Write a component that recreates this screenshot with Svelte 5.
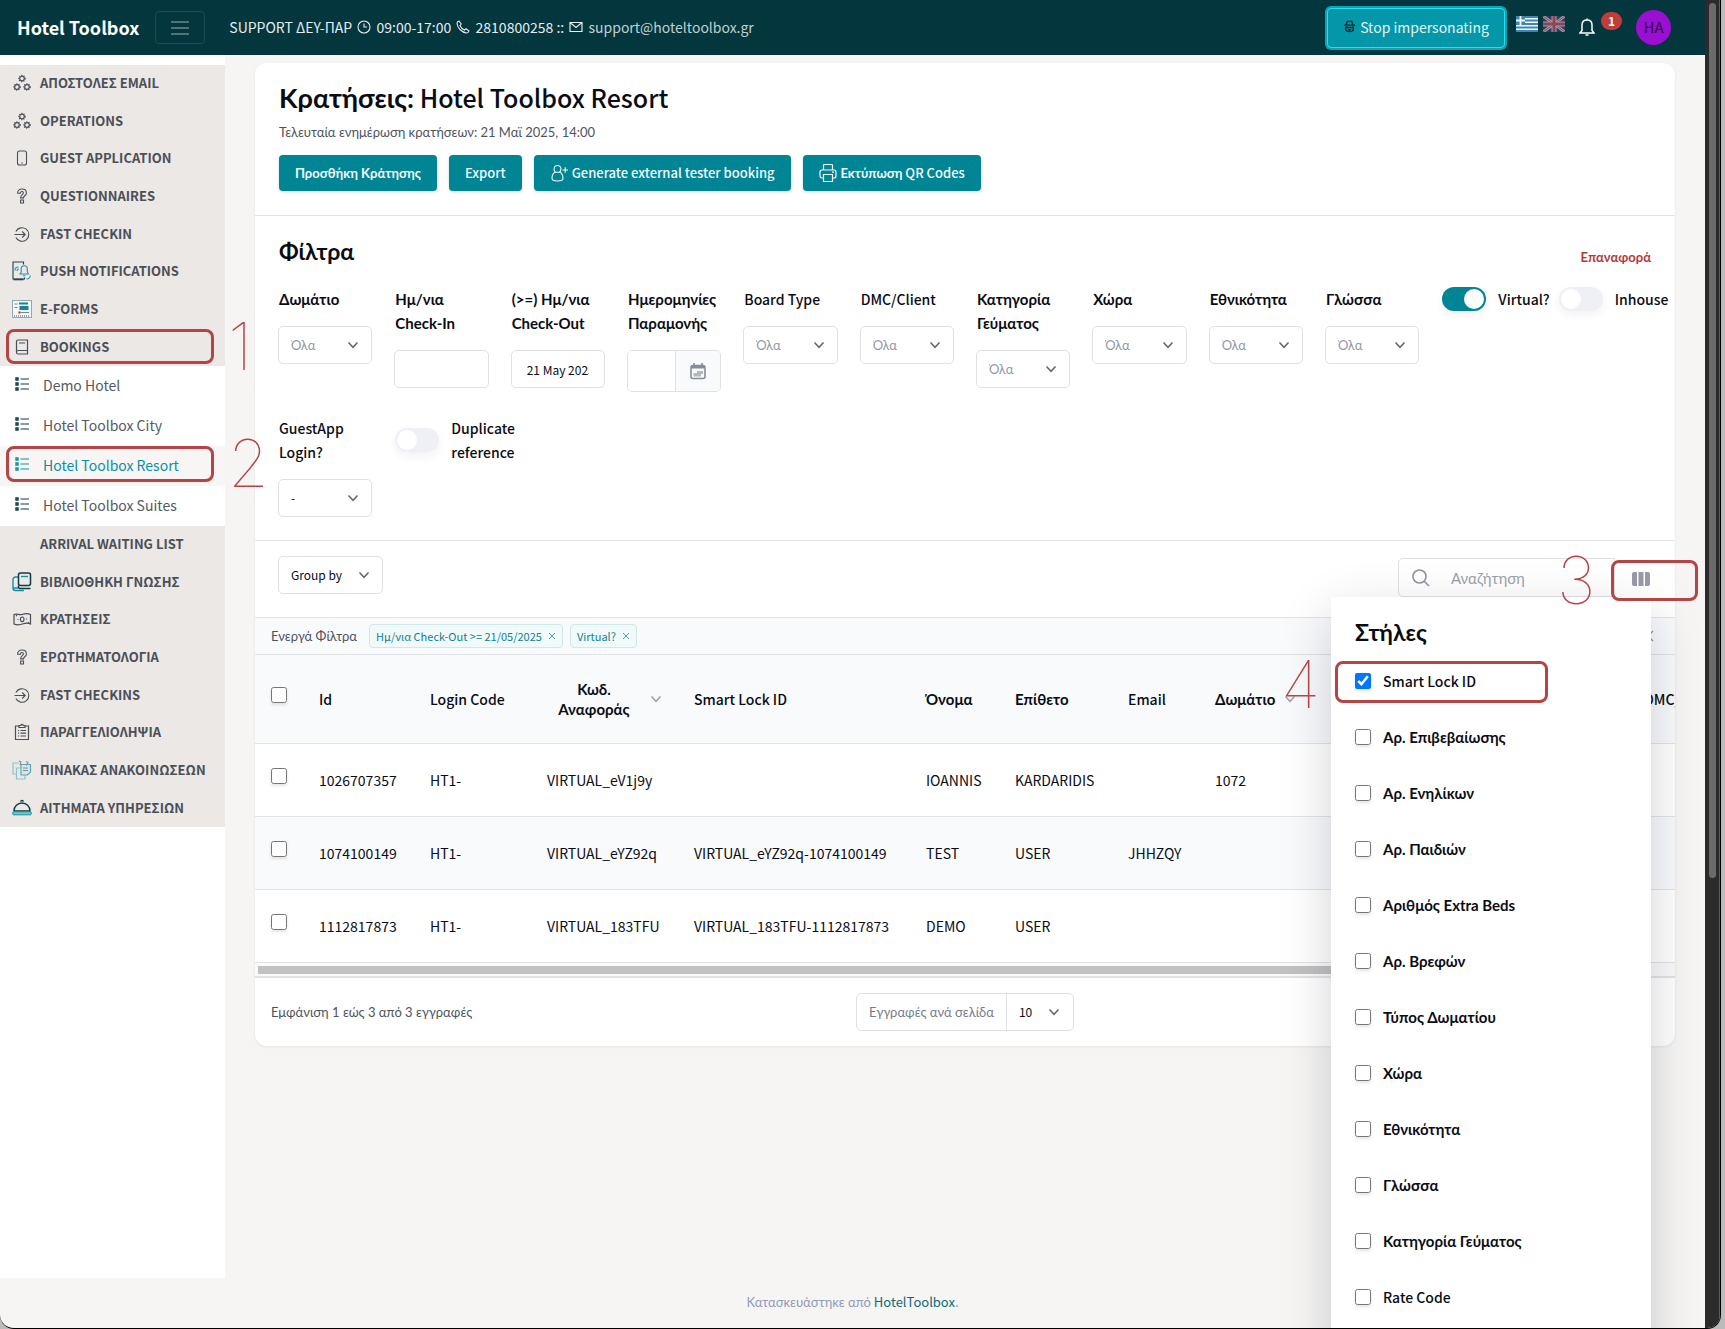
<script lang="ts">
  type MenuItem = { label: string; icon: string };

  const topMenu: MenuItem[] = [
    { label: 'ΑΠΟΣΤΟΛΕΣ EMAIL', icon: 'gears' },
    { label: 'OPERATIONS', icon: 'gears' },
    { label: 'GUEST APPLICATION', icon: 'phone' },
    { label: 'QUESTIONNAIRES', icon: 'question' },
    { label: 'FAST CHECKIN', icon: 'enter' },
    { label: 'PUSH NOTIFICATIONS', icon: 'push' },
    { label: 'E-FORMS', icon: 'form' },
    { label: 'BOOKINGS', icon: 'book' }
  ];

  const hotels = ['Demo Hotel', 'Hotel Toolbox City', 'Hotel Toolbox Resort', 'Hotel Toolbox Suites'];
  let activeHotel = $state('Hotel Toolbox Resort');

  const bottomMenu: MenuItem[] = [
    { label: 'ARRIVAL WAITING LIST', icon: '' },
    { label: 'ΒΙΒΛΙΟΘΗΚΗ ΓΝΩΣΗΣ', icon: 'library' },
    { label: 'ΚΡΑΤΗΣΕΙΣ', icon: 'money' },
    { label: 'ΕΡΩΤΗΜΑΤΟΛΟΓΙΑ', icon: 'question' },
    { label: 'FAST CHECKINS', icon: 'enter' },
    { label: 'ΠΑΡΑΓΓΕΛΙΟΛΗΨΙΑ', icon: 'clipboard' },
    { label: 'ΠΙΝΑΚΑΣ ΑΝΑΚΟΙΝΩΣΕΩΝ', icon: 'board' },
    { label: 'ΑΙΤΗΜΑΤΑ ΥΠΗΡΕΣΙΩΝ', icon: 'bell' }
  ];

  const filters = [
    { id: 'room', label: 'Δωμάτιο', type: 'select' },
    { id: 'checkin', label: 'Ημ/νια Check-In', type: 'text' },
    { id: 'checkout', label: '(>=) Ημ/νια Check-Out', type: 'text', value: '21 May 2025' },
    { id: 'stay', label: 'Ημερομηνίες Παραμονής', type: 'range' },
    { id: 'board', label: 'Board Type', type: 'select' },
    { id: 'dmc', label: 'DMC/Client', type: 'select' },
    { id: 'meal', label: 'Κατηγορία Γεύματος', type: 'select' },
    { id: 'country', label: 'Χώρα', type: 'select' },
    { id: 'nationality', label: 'Εθνικότητα', type: 'select' },
    { id: 'language', label: 'Γλώσσα', type: 'select' },
    { id: 'virtual', label: 'Virtual?', type: 'switch', on: true },
    { id: 'inhouse', label: 'Inhouse', type: 'switch' },
    { id: 'guestapp', label: 'GuestApp Login?', type: 'select', value: '-' },
    { id: 'duplicate', label: 'Duplicate reference', type: 'switch' }
  ];

  const bookings = [
    { id: '1026707357', code: 'HT1-', ref: 'VIRTUAL_eV1j9y', lock: '', name: 'IOANNIS', surname: 'KARDARIDIS', email: '', room: '1072' },
    { id: '1074100149', code: 'HT1-', ref: 'VIRTUAL_eYZ92q', lock: 'VIRTUAL_eYZ92q-1074100149', name: 'TEST', surname: 'USER', email: 'JHHZQY', room: '' },
    { id: '1112817873', code: 'HT1-', ref: 'VIRTUAL_183TFU', lock: 'VIRTUAL_183TFU-1112817873', name: 'DEMO', surname: 'USER', email: '', room: '' }
  ];

  const columns = [
    'Smart Lock ID',
    'Αρ. Επιβεβαίωσης',
    'Αρ. Ενηλίκων',
    'Αρ. Παιδιών',
    'Αριθμός Extra Beds',
    'Αρ. Βρεφών',
    'Τύπος Δωματίου',
    'Χώρα',
    'Εθνικότητα',
    'Γλώσσα',
    'Κατηγορία Γεύματος',
    'Rate Code'
  ];

  const langOf = (text: string) => (/[Ͱ-Ͽ]/.test(text) ? 'el' : 'en');
</script>

{#snippet chevron()}
  <svg class="chevron" viewBox="0 0 12 12" width="12" height="12" aria-hidden="true">
    <path d="M1.5 3.5 6 8.3l4.5-4.8" fill="none" stroke="currentColor" stroke-width="1.5" />
  </svg>
{/snippet}

{#snippet cross()}
  <svg class="x" viewBox="0 0 8 8" width="8" height="8" aria-hidden="true">
    <path d="M1 1l6 6M7 1 1 7" stroke="currentColor" />
  </svg>
{/snippet}

{#snippet menuIcon(name: string)}
  <svg class="menu-icon" viewBox="0 0 20 20" width="20" height="20" aria-hidden="true">
    {#if name === 'gears'}
      <g fill="none" stroke="#4b4f56" stroke-width="1.2">
        <circle cx="10" cy="5.5" r="2.3" /><circle cx="5" cy="14" r="2.3" /><circle cx="15" cy="14" r="2.3" />
        <g stroke-dasharray="1 1.35" stroke-width="1.2">
          <circle cx="10" cy="5.5" r="3.2" /><circle cx="5" cy="14" r="3.2" /><circle cx="15" cy="14" r="3.2" />
        </g>
      </g>
    {:else if name === 'phone'}
      <rect x="5.5" y="3" width="9" height="14" rx="2" fill="none" stroke="#4b4f56" stroke-width="1.1" />
      <path d="M9.2 15h1.6" stroke="#4b4f56" />
    {:else if name === 'question'}
      <path
        d="M5.6 7.2c0-2.6 1.9-4.2 4.4-4.2s4.4 1.6 4.4 3.9c0 2.6-2.9 3-2.9 5H8.6c0-3 2.8-3.2 2.8-5 0-.8-.6-1.4-1.4-1.4s-1.6.6-1.6 1.7zM8.6 14h2.9v3H8.6z"
        fill="none" stroke="#4b4f56" stroke-width="1.1" />
    {:else if name === 'enter'}
      <path d="M3.9 7.5A6.8 6.8 0 1 1 3.9 13.5M2.5 10.5h10.500M10.2 7.5l3 3-3 3" fill="none" stroke="#4b4f56" stroke-width="1.1" />
    {:else if name === 'push'}
      <path d="M3.5 1h8v2.5M3.5 1H1v17h11.500v-1.500" fill="none" stroke="#22444c" stroke-width="1.1" />
      <path d="M1.5 18.5h10" stroke="#22444c" stroke-width="1.6" />
      <path d="M8 13h8.500l-1.200-1.800V8c0-2-1.300-3.200-3-3.200S9.200 6 9.200 8v3.200zM11 14.800h2.500M3 9.500c0-2 1.500-3.500 3.500-3.500M5 10c0-1 .8-2 2-2M14.500 18c2 0 3.800-1.500 3.800-3.500" fill="none" stroke="#2a93a5" stroke-width="1.1" />
    {:else if name === 'form'}
      <rect x=".5" y="1.5" width="19" height="17" fill="#f3f7f7" stroke="#8fa9ad" />
      <path d="M7 4.5h9" stroke="#178395" stroke-width="2" />
      <path d="M7.5 7h9v4h-9z" fill="#178395" />
      <path d="M2.5 5h3M2.5 8.500h3M9 13.500h8" stroke="#6e8a8e" />
      <circle cx="7.5" cy="13.5" r="1.2" fill="#c2413b" />
      <path d="M2 17h16" stroke="#8fa9ad" stroke-width="2" stroke-dasharray="1 1" />
    {:else if name === 'book'}
      <path d="M4.5 4.5c0-1 .6-1.500 1.500-1.500h9.500v14H6c-.9 0-1.500-.5-1.500-1.500zm0 10.500c0-1 .6-1.500 1.500-1.500h9.500M7 6h6" fill="none" stroke="#4b4f56" stroke-width="1.2" />
    {:else if name === 'library'}
      <path d="M6.5 5H3.500C2 5 1 6 1 7.500V16c0 1.500 1 2.500 2.500 2.500H12M1 16h5" fill="none" stroke="#16909f" stroke-width="1.4" />
      <rect x="6.5" y="1" width="12" height="12.5" rx="2" fill="none" stroke="#0d3c46" stroke-width="1.5" />
      <path d="M9 4.5h7" stroke="#16909f" stroke-width="1.4" />
      <path d="M6.5 13.500V15c0 1 .6 1.500 1.500 1.500h10.500" fill="none" stroke="#0d3c46" stroke-width="1.5" />
    {:else if name === 'money'}
      <path d="M2 5.5c3-1.500 5 1 8 0s5-1.500 8.500 0v9.500c-3-1.500-5-1-8 0s-5 1.500-8.500 0z" fill="none" stroke="#4b4f56" stroke-width="1.2" />
      <ellipse cx="10.2" cy="10.3" rx="1.8" ry="2.3" fill="none" stroke="#4b4f56" stroke-width="1.1" />
      <path d="M5.5 10.5h1M14 10h1M4 7l1-.8M16 14l1-.8" stroke="#4b4f56" stroke-width="1.2" />
    {:else if name === 'clipboard'}
      <path d="M7 4H3.500v13.500h13V4H13M7 5.500h6V3.500h-1.800a1.200 1.200 0 0 0-2.400 0H7z" fill="none" stroke="#4b4f56" stroke-width="1.2" />
      <path d="M8.5 8.500h5.500M8.500 11.200h5.500M8.500 14h5.500M6 8.500h1.200M6 11.200h1.200M6 14h1.200" stroke="#4b4f56" stroke-width="1.2" />
    {:else if name === 'board'}
      <path d="M7 3H1v11h3.500M13 14.500V19H4.500V8H8" fill="none" stroke="#8fc3ca" stroke-width="1.2" />
      <path d="M9 4.500h9.500v7.500l-3 3H9z" fill="#d9e6e8" stroke="#57aab5" stroke-width="1.2" />
      <path d="M7 1l2 1-1 3M14 1.500l2 1-1.500 3M11 8h5M11 10.500h5" fill="none" stroke="#7f9095" stroke-width="1.1" />
    {:else if name === 'bell'}
      <path d="M2 13a8 8 0 0 1 16 0zM8.500 3.500a1.600 1.600 0 0 1 3 0" fill="none" stroke="#0d3c46" stroke-width="1.4" />
      <rect x=".7" y="13.8" width="18.6" height="3" rx="1" fill="#7cc6cf" stroke="#16909f" />
    {/if}
  </svg>
{/snippet}

{#snippet menu(items: MenuItem[])}
  <ul class="menu">
    {#each items as item}
      <li class="menu-item">
        <a class="menu-link" href="#top">
          {@render menuIcon(item.icon)}
          <span lang={langOf(item.label)}>{item.label}</span>
        </a>
        {#if item.label === 'BOOKINGS'}
          <span class="ring"></span>
          <span class="step">1</span>
        {/if}
      </li>
    {/each}
  </ul>
{/snippet}

<div class="window">
  <div class="page">
    <header class="topbar">
      <a class="brand" href="#top">Hotel Toolbox</a>
      <button class="toggler" aria-label="Menu">
        <svg viewBox="0 0 18 18" width="18" height="18"><path d="M0 3h18M0 9h18M0 15h18" stroke="currentColor" stroke-width="1.2" /></svg>
      </button>
      <p class="support">
        SUPPORT <span lang="el">ΔΕΥ-ΠΑΡ</span>
        <svg viewBox="0 0 14 14" width="16" height="14"><path d="M7 1a6 6 0 1 1 0 12A6 6 0 0 1 7 1zm0 2.500V7h3" fill="none" stroke="currentColor" stroke-width="1.1" /></svg>
        09:00-17:00
        <svg viewBox="0 0 14 14" width="16" height="14"><path d="M3 1l2.200 3L4 5.500c.8 2 2.500 3.600 4.500 4.500L10 8.800l3 2.200c-.3 1.300-1.300 2-2.500 2C6 12.500 1.500 8 1 3.500 1 2.300 1.700 1.300 3 1z" fill="none" stroke="currentColor" stroke-width="1.1" /></svg>
        2810800258 ::
        <svg viewBox="0 0 14 14" width="16" height="14"><path d="M1 2.500h12v9H1zl6 5 6-5" fill="none" stroke="currentColor" stroke-width="1.2" /></svg>
        <a href="mailto:support@hoteltoolbox.gr">support@hoteltoolbox.gr</a>
      </p>
      <button class="impersonate">
        <svg viewBox="0 0 14 14" width="13" height="13"><path d="M3.500 5 4.500 1.500h5l1 3.500M1 5.500h12M2.500 8h9M3 7v4c1 1.800 7 1.800 8 0V7M5.500 10.500h3" fill="none" stroke="#0b2a30" stroke-width="1.5" /></svg>
        Stop impersonating
      </button>
      <div class="flags">
        <svg viewBox="0 0 22 16" width="22" height="16">
          <path d="M0 0h22v16H0z" fill="#f3f7fa" />
          <path d="M0 1h22M0 4.500h22M0 8h22M0 11.500h22M0 15h22" stroke="#3f86b8" stroke-width="1.8" />
          <path d="M0 0h9v9H0z" fill="#3f86b8" />
          <path d="M4.500 0v9M0 4.500h9" stroke="#f3f7fa" stroke-width="1.8" />
        </svg>
        <svg viewBox="0 0 22 16" width="22" height="16">
          <path d="M0 0h22v16H0z" fill="#2d3a60" />
          <path d="M0 0l22 16M22 0 0 16" stroke="#9a9fae" stroke-width="3" />
          <path d="M0 0l22 16M22 0 0 16" stroke="#92434f" />
          <path d="M11 0v16M0 8h22" stroke="#9a9fae" stroke-width="5" />
          <path d="M11 0v16M0 8h22" stroke="#92434f" stroke-width="3" />
        </svg>
      </div>
      <button class="alerts" aria-label="Notifications">
        <svg viewBox="0 0 16 20" width="16" height="20"><path d="M1 15h14l-2-2.500V7c0-3-2-5-5-5S3 4 3 7v5.500zM8 .5V2M6.500 17h3" fill="none" stroke="currentColor" stroke-width="1.5" /></svg>
        <span class="count">1</span>
      </button>
      <span class="avatar">HA</span>
    </header>

    <div class="body">
      <nav class="sidebar">
        {@render menu(topMenu)}
        <ul class="submenu">
          {#each hotels as hotel}
            <li class="submenu-item" class:active={hotel === activeHotel}>
              <a class="submenu-link" href="#top" onclick={() => (activeHotel = hotel)}>
                <svg viewBox="0 0 14 14" width="14" height="14" aria-hidden="true">
                  <path d="M1 1h2v2H1zM1 6h2v2H1zM1 11h2v2H1z" fill="none" stroke="currentColor" stroke-width="1.4" />
                  <path d="M5.500 2H14M5.500 7H14M5.500 12H14" stroke="currentColor" stroke-width="1.2" />
                </svg>
                {hotel}
              </a>
              {#if hotel === 'Hotel Toolbox Resort'}
                <span class="ring"></span>
                <span class="step">2</span>
              {/if}
            </li>
          {/each}
        </ul>
        {@render menu(bottomMenu)}
      </nav>

      <main class="main">
        <section class="card">
          <div class="card-head">
            <h1><span lang="el">Κρατήσεις:</span> Hotel Toolbox Resort</h1>
            <p class="updated" lang="el">Τελευταία ενημέρωση κρατήσεων: 21 Μαϊ 2025, 14:00</p>
            <div class="actions">
              <button class="btn" lang="el">Προσθήκη Κράτησης</button>
              <button class="btn">Export</button>
              <button class="btn">
                <svg viewBox="0 0 18 18" width="18" height="18"><path d="M7.500 1.500a3.400 3.400 0 1 1 0 6.800 3.400 3.400 0 0 1 0-6.800zM5.500 8C3 9 2 11.500 2 14.500c0 1.500 2 2.500 5.500 2.500s5.500-1 5.500-2.500c0-3-1-5.500-3.500-6.500M12.500 6H18M15.200 3.200v5.600" fill="none" stroke="currentColor" stroke-width="1.1" /></svg>
                Generate external tester booking
              </button>
              <button class="btn">
                <svg viewBox="0 0 18 18" width="18" height="18"><path d="M4.500 6V1.500c0-.6.400-1 1-1h7c.6 0 1 .4 1 1V6M4.500 14H3c-1.300 0-2-.8-2-2V8c0-1.300.8-2 2-2h12c1.300 0 2 .7 2 2v4c0 1.200-.7 2-2 2h-1.500M4.500 10.500h9v7h-9zM13 8.200h2" fill="none" stroke="currentColor" stroke-width="1.2" /></svg>
                <span><span lang="el">Εκτύπωση</span> QR Codes</span>
              </button>
            </div>
          </div>

          <div class="filters">
            <div class="filters-head">
              <h2 lang="el">Φίλτρα</h2>
              <button class="reset" lang="el">Επαναφορά</button>
            </div>
            <div class="filter-grid">
              {#each filters as filter}
                {#if filter.type === 'switch'}
                  <label class="switch">
                    <input type="checkbox" checked={filter.on} />
                    <span>{filter.label}</span>
                  </label>
                {:else}
                  <div class="field">
                    <label for={filter.id} lang={langOf(filter.label)}>{filter.label}</label>
                    {#if filter.type === 'select'}
                      <div class="select" class:placeholder={!filter.value}>
                        <select id={filter.id} lang={filter.value ? 'en' : 'el'}>
                          <option>{filter.value ?? 'Όλα'}</option>
                        </select>
                        {@render chevron()}
                      </div>
                    {:else if filter.type === 'range'}
                      <div class="range">
                        <input id={filter.id} type="text" />
                        <span class="range-icon">
                          <svg viewBox="0 0 16 18" width="16" height="18"><path d="M3 3.500h10a2 2 0 0 1 2 2v9a2 2 0 0 1-2 2H3a2 2 0 0 1-2-2v-9a2 2 0 0 1 2-2zM4 1v3M12 1v3" fill="none" stroke="#878d98" stroke-width="1.6" /><path d="M1 4h14v2.500H1z" fill="#878d98" /><path d="M7 9h6v3h-2v2.500H3.500V11H7z" fill="#b4b8c0" /></svg>
                        </span>
                      </div>
                    {:else}
                      <input class="text" id={filter.id} type="text" value={filter.value ?? ''} />
                    {/if}
                  </div>
                {/if}
              {/each}
            </div>
          </div>

          <div class="toolbar">
            <div class="select group-by">
              <select aria-label="Group by"><option>Group by</option></select>
              {@render chevron()}
            </div>
            <div class="tools">
              <label class="search">
                <svg viewBox="0 0 18 18" width="18" height="18"><path d="M7.500 1a6.500 6.500 0 1 1 0 13 6.500 6.500 0 0 1 0-13zM12.200 12.200 17 17" fill="none" stroke="currentColor" stroke-width="1.6" /></svg>
                <input type="text" placeholder="Αναζήτηση" lang="el" aria-label="Αναζήτηση" />
              </label>
              <button class="columns-btn" aria-label="Στήλες">
                <svg viewBox="0 0 18 14" width="18" height="14"><path d="M2 0h3v14H2a2 2 0 0 1-2-2V2a2 2 0 0 1 2-2zM6.500 0h5v14h-5zM13 0h3a2 2 0 0 1 2 2v10a2 2 0 0 1-2 2h-3z" fill="currentColor" /></svg>
              </button>
              <div class="columns-menu">
                <h2 lang="el">Στήλες</h2>
                {#each columns as column, i}
                  <label class="column">
                    <input type="checkbox" checked={i === 0} />
                    <span lang={langOf(column)}>{column}</span>
                    {#if i === 0}
                      <span class="ring"></span>
                      <span class="step">4</span>
                    {/if}
                  </label>
                {/each}
              </div>
              <span class="ring"></span>
              <span class="step">3</span>
            </div>
          </div>

          <div class="active-filters">
            <span lang="el">Ενεργά Φίλτρα</span>
            <button class="chip">Ημ/νια Check-Out &gt;= 21/05/2025{@render cross()}</button>
            <button class="chip">Virtual?{@render cross()}</button>
            <button class="clear" aria-label="Clear">
              <svg viewBox="0 0 12 12" width="12" height="12"><path d="M1 1l10 10M11 1 1 11" stroke="currentColor" stroke-width="1.3" /></svg>
            </button>
          </div>

          <div class="table-wrap">
            <table>
              <colgroup>
                <col class="w-check" /><col class="w-id" /><col class="w-code" /><col class="w-ref" /><col class="w-lock" />
                <col class="w-name" /><col class="w-surname" /><col class="w-email" /><col class="w-room" /><col class="w-dmc" />
              </colgroup>
              <thead>
                <tr>
                  <th><input type="checkbox" aria-label="All" /></th>
                  <th>Id</th>
                  <th>Login Code</th>
                  <th><span class="sortable"><span lang="el">Κωδ. Αναφοράς</span>{@render chevron()}</span></th>
                  <th>Smart Lock ID</th>
                  <th lang="el">Όνομα</th>
                  <th lang="el">Επίθετο</th>
                  <th>Email</th>
                  <th><span class="sortable"><span lang="el">Δωμάτιο</span>{@render chevron()}</span></th>
                  <th>DMC/Client</th>
                </tr>
              </thead>
              <tbody>
                {#each bookings as booking}
                  <tr>
                    <td><input type="checkbox" aria-label={booking.id} /></td>
                    <td>{booking.id}</td>
                    <td>{booking.code}</td>
                    <td>{booking.ref}</td>
                    <td>{booking.lock}</td>
                    <td>{booking.name}</td>
                    <td>{booking.surname}</td>
                    <td>{booking.email}</td>
                    <td>{booking.room}</td>
                    <td></td>
                  </tr>
                {/each}
              </tbody>
            </table>
          </div>
          <div class="h-scroll"><span></span></div>

          <div class="card-foot">
            <p lang="el">Εμφάνιση 1 εώς 3 από 3 εγγραφές</p>
            <div class="per-page">
              <label for="per-page" lang="el">Εγγραφές ανά σελίδα</label>
              <div class="select">
                <select id="per-page"><option>10</option></select>
                {@render chevron()}
              </div>
            </div>
          </div>
        </section>
      </main>
    </div>

    <footer class="footer">
      <span lang="el">Κατασκευάστηκε από</span> <a href="#top">HotelToolbox</a>.
    </footer>
  </div>
  <div class="scrollbar"><span></span></div>
</div>

<style>
  :global(body) {
    margin: 0;
    background: #bcbbbb;
  }

  .window {
    --teal: #018594;
    --line: #e2e3e7;
    --ink: #0a0c14;
    --red: #b54545;
    --latin: 'Noto Sans CJK JP', 'Open Sans', sans-serif;
    --greek: Lato, 'Open Sans', sans-serif;
    display: flex;
    box-sizing: border-box;
    height: 100vh;
    margin-right: 4px;
    overflow: hidden;
    border-right: 1px solid #000;
    border-bottom: 1px solid #000;
    border-radius: 0 0 14px 14px;
    background: #f6f5f4;
    color: var(--ink);
    font-family: var(--latin);
    font-size: 14px;
    line-height: 24px;
  }

  .window *,
  .window *::before {
    box-sizing: border-box;
  }

  ul {
    list-style: none;
    margin: 0;
    padding: 0;
  }

  h1,
  h2,
  p {
    margin: 0;
  }

  a {
    color: inherit;
    text-decoration: none;
  }

  button,
  input,
  select {
    margin: 0;
    font: inherit;
    color: inherit;
  }

  /* the base face has no accented Greek of its own */
  .window :lang(el) {
    font-family: var(--greek);
  }

  h1 :lang(el),
  h2:lang(el),
  th:lang(el),
  th :lang(el),
  .btn:lang(el),
  .btn :lang(el),
  .reset:lang(el),
  .field > label:lang(el),
  .column :lang(el) {
    font-weight: 700;
  }

  th:lang(el),
  th :lang(el),
  .field > label:lang(el),
  .column :lang(el) {
    font-size: 15px;
  }

  h1 :lang(el) {
    font-size: 27px;
  }

  svg {
    flex: none;
  }

  .page {
    flex: 1;
    min-width: 0;
    display: flex;
    flex-direction: column;
  }

  .scrollbar {
    width: 15px;
    padding: 3px 3px 0 4px;
    background: #2b2b2b;
    border-right: 1px solid #5c5c5c;
  }

  .scrollbar span {
    display: block;
    height: 66%;
    border-radius: 4px;
    background: #6b6b6b;
  }

  .topbar {
    display: flex;
    align-items: center;
    height: 55px;
    padding: 0 34px 0 17px;
    background: #03363d;
    color: #e6eef0;
  }

  .brand {
    padding-bottom: 2px;
    color: #fff;
    font-size: 18px;
    font-weight: 700;
  }

  .toggler {
    display: grid;
    place-items: center;
    width: 50px;
    height: 33px;
    margin: 0 24px 0 16px;
    border: 1px solid #1d4b52;
    border-radius: 4px;
    background: none;
    color: #9db3b6;
  }

  .menu,
  .support {
    --greek: var(--latin);
  }

  .support {
    flex: 1;
    padding-bottom: 2px;
    white-space: nowrap;
  }

  .support svg {
    margin: 0 1px;
    vertical-align: -1px;
  }

  .support a {
    color: #c0d0d3;
  }

  .impersonate {
    display: flex;
    align-items: center;
    gap: 4px;
    height: 40px;
    padding: 0 15px 2px;
    border: 1px solid #22e0f2;
    border-radius: 4px;
    background: #0397a9;
    box-shadow: 0 0 0 2px #0da3b5;
    color: #e4f5f7;
  }

  .flags {
    display: flex;
    gap: 5px;
    margin: 0 14px 8px 11px;
  }

  .alerts {
    display: flex;
    align-items: center;
    gap: 6px;
    padding: 0;
    border: 0;
    background: none;
    color: #fff;
  }

  .count {
    height: 18px;
    padding: 0 7px;
    margin-bottom: 13px;
    border-radius: 9px;
    background: #c13d3a;
    font-size: 12px;
    font-weight: 700;
    line-height: 18px;
  }

  .avatar {
    width: 35px;
    height: 35px;
    margin-left: 14px;
    border-radius: 50%;
    background: #9a0fd1;
    color: #2a1038;
    font-size: 15px;
    line-height: 34px;
    text-align: center;
  }

  .body {
    flex: 1;
    display: flex;
    min-height: 0;
  }

  .sidebar {
    position: relative;
    z-index: 1;
    width: 225px;
    padding-top: 10px;
    background: #fff;
  }

  .menu {
    background: #ebe8e6;
    color: #4b4f56;
    font-size: 13px;
    font-weight: 700;
  }

  .menu-item,
  .submenu-item {
    position: relative;
    height: 38px;
  }

  .menu-item:nth-child(3n + 2) {
    height: 37px;
  }

  .menu-link {
    display: flex;
    align-items: center;
    gap: 8px;
    height: 100%;
    padding: 0 0 2px 12px;
  }

  .submenu-item {
    height: 40px;
    color: #555a62;
  }

  .submenu-item.active {
    background: #f7f6f5;
    color: #0b8fa2;
  }

  .submenu-link {
    display: flex;
    align-items: center;
    gap: 14px;
    height: 100%;
    padding: 0 0 3px 15px;
  }

  .submenu-link svg {
    margin-bottom: 2px;
    color: #0d3c46;
  }

  .submenu-item.active svg {
    color: #0b8fa2;
  }

  /* numbered walkthrough marks that lie over the page */
  .ring {
    position: absolute;
    inset: 0 11px 2px 6px;
    border: 3px solid var(--red);
    border-radius: 8px;
    pointer-events: none;
  }

  .submenu .ring {
    bottom: 4px;
  }

  .step {
    position: absolute;
    top: -16px;
    left: 228px;
    color: var(--red);
    font-family: Inter, Roboto, sans-serif;
    font-size: 66px;
    font-weight: 100;
    line-height: 66px;
    pointer-events: none;
  }

  .main {
    flex: 1;
    min-width: 0;
    padding: 8px 30px 0;
  }

  .card {
    border-radius: 12px;
    background: #fff;
    box-shadow: 0 1px 3px rgba(20, 20, 40, 0.08);
  }

  .card-head {
    padding: 16px 24px 24px;
    border-bottom: 1px solid var(--line);
  }

  h1 {
    font-size: 25px;
    font-weight: 500;
    line-height: 36px;
  }

  .updated {
    padding: 4px 0 11px;
    color: #4d535e;
    font-size: 13px;
  }

  .actions {
    display: flex;
    gap: 12px;
  }

  .btn {
    display: flex;
    align-items: center;
    gap: 4px;
    height: 36px;
    padding: 0 16px;
    border: 0;
    border-radius: 4px;
    background: var(--teal);
    box-shadow: 0 1px 3px rgba(0, 60, 70, 0.2);
    color: #f2fafb;
    font-size: 13px;
    font-weight: 500;
  }

  .filters {
    padding: 19px 24px 23px;
    border-bottom: 1px solid var(--line);
  }

  .filters-head {
    display: flex;
    justify-content: space-between;
    align-items: flex-end;
    margin-bottom: 18px;
  }

  h2 {
    font-size: 23px;
    font-weight: 500;
    line-height: 32px;
  }

  .filters-head h2 {
    padding-bottom: 2px;
  }

  .reset {
    padding: 0;
    border: 0;
    background: none;
    color: #b33a3a;
    font-size: 13px;
    font-weight: 500;
  }

  .filter-grid {
    display: grid;
    grid-template-columns: repeat(12, minmax(0, 1fr));
    gap: 24px 22px;
    align-items: start;
    margin: 0 -1px;
  }

  .field {
    display: grid;
    gap: 15px;
    min-width: 0;
  }

  .field > label,
  .switch {
    padding-left: 1px;
    font-weight: 500;
  }

  .switch {
    display: flex;
    align-items: center;
    gap: 12px;
  }

  .switch input {
    flex: none;
    appearance: none;
    width: 44px;
    height: 24px;
    padding: 2px;
    border-radius: 12px;
    background: #eef0f5;
    box-shadow: 0 4px 10px rgba(30, 40, 80, 0.06);
  }

  .switch input::before {
    content: '';
    display: block;
    width: 20px;
    height: 20px;
    border-radius: 50%;
    background: #fff;
  }

  .switch input:checked {
    background: var(--teal);
  }

  .switch input:checked::before {
    margin-left: auto;
  }

  .select {
    display: grid;
    align-items: center;
  }

  .select > :global(*) {
    grid-area: 1 / 1;
  }

  .select select,
  .text,
  .range {
    appearance: none;
    width: 100%;
    height: 38px;
    padding: 0 12px;
    border: 1px solid #dfe1e5;
    border-radius: 5px;
    background: #fff;
    font-size: 12px;
  }

  .select.placeholder select {
    color: #9297a3;
    font-size: 13px;
  }

  .text {
    padding: 0 15px;
  }

  .chevron {
    color: #60656f;
  }

  .select .chevron {
    justify-self: end;
    margin-right: 13px;
    pointer-events: none;
  }

  .range {
    display: flex;
    height: 42px;
    padding: 0;
    overflow: hidden;
  }

  .range input {
    flex: 1;
    min-width: 0;
    padding: 0 8px;
    border: 0;
  }

  .range-icon {
    display: grid;
    place-items: center;
    width: 45px;
    border-left: 1px solid #dfe1e5;
    background: #f9fafc;
  }

  .toolbar {
    display: flex;
    justify-content: space-between;
    padding: 15px 8px 20px 23px;
    border-bottom: 1px solid var(--line);
  }

  .group-by {
    width: 105px;
    height: 38px;
  }

  .tools {
    position: relative;
    display: flex;
    height: 39px;
    margin-top: 2px;
  }

  .search {
    display: flex;
    align-items: center;
    gap: 21px;
    width: 217px;
    padding-left: 13px;
    border: 1px solid #dfe1e5;
    border-radius: 5px 0 0 5px;
    color: #8d93a0;
  }

  .search input {
    min-width: 0;
    flex: 1;
    padding: 0;
    border: 0;
    background: none;
    font-size: 15px;
  }

  .search input::placeholder {
    color: #9ba1ad;
    opacity: 1;
  }

  .columns-btn {
    width: 52px;
    padding: 4px 0 0;
    border: 0;
    background: none;
    color: #959ba9;
  }

  .tools > .ring {
    inset: 2px -31px -4px 213px;
  }

  .tools > .step {
    top: -11px;
    left: 159px;
  }

  .columns-menu {
    position: absolute;
    z-index: 1;
    top: 100%;
    right: 16px;
    width: 320px;
    height: 100vh;
    padding: 19px 24px;
    background: #fff;
    box-shadow: 0 16px 48px rgba(10, 12, 30, 0.18);
  }

  .tools > .ring,
  .tools > .step {
    z-index: 2;
  }

  .column {
    position: relative;
    display: flex;
    align-items: center;
    gap: 12px;
    height: 24px;
    margin-bottom: 32px;
    font-weight: 500;
  }

  .columns-menu h2 {
    margin-bottom: 21px;
  }

  .column .ring {
    inset: -8px 79px -10px -20px;
  }

  .column .step {
    top: -18px;
    left: -74px;
  }

  .column input,
  table input {
    display: block;
    width: 16px;
    height: 16px;
    border-radius: 3px;
    box-shadow: 0 2px 3px rgba(0, 0, 0, 0.1);
  }

  .active-filters {
    display: flex;
    align-items: center;
    gap: 7px;
    height: 37px;
    padding: 0 21px 0 16px;
    border-bottom: 1px solid var(--line);
    background: #f9fafc;
    color: #4d535e;
    font-size: 13px;
  }

  .active-filters > :first-child {
    margin-right: 5px;
  }

  .chip {
    display: flex;
    align-items: center;
    gap: 6px;
    height: 24px;
    padding: 0 6px;
    border: 1px solid #cfe8ec;
    border-radius: 4px;
    background: #f1fafb;
    color: #12808e;
    font-size: 11px;
  }

  .x {
    color: #4f9aa4;
  }

  .clear {
    display: grid;
    margin-left: auto;
    padding: 0;
    border: 0;
    background: none;
    color: #8d93a0;
  }

  .table-wrap {
    overflow: hidden;
  }

  table {
    table-layout: fixed;
    width: 1500px;
    border-collapse: collapse;
  }

  th,
  td {
    height: 73px;
    padding: 0 16px;
    border-bottom: 1px solid var(--line);
    text-align: left;
    white-space: nowrap;
  }

  th {
    height: 88px;
    background: #f9fafc;
    font-weight: 500;
  }

  td input,
  th input {
    margin-bottom: 8px;
  }

  tbody tr:nth-child(even) {
    background: #f9fafc;
  }

  .sortable {
    display: flex;
    align-items: center;
    gap: 9px;
    line-height: 20px;
  }

  .sortable > span {
    white-space: normal;
    text-align: center;
  }

  .sortable .chevron {
    color: #9ba1ad;
  }

  .w-check { width: 48px; }
  .w-id { width: 111px; }
  .w-code { width: 117px; }
  .w-ref { width: 147px; }
  .w-lock { width: 232px; }
  .w-name { width: 89px; }
  .w-surname { width: 113px; }
  .w-email { width: 87px; }
  .w-room { width: 429px; }
  .w-dmc { width: 127px; }

  .h-scroll {
    padding: 3px 3px 2px;
    border-bottom: 2px solid var(--line);
    background: #fafafb;
  }

  .h-scroll span {
    display: block;
    width: 85%;
    height: 8px;
    background: #c1c1c1;
  }

  .card-foot {
    display: grid;
    grid-template-columns: 1fr auto 1fr;
    align-items: center;
    padding: 15px 16px;
    color: #4d535e;
    font-size: 13px;
  }

  .per-page {
    display: flex;
    border: 1px solid #dfe1e5;
    border-radius: 5px;
  }

  .per-page label {
    padding: 0 12px;
    border-right: 1px solid #dfe1e5;
    color: #767c88;
    line-height: 36px;
  }

  .per-page select {
    width: 66px;
    height: 36px;
    border: 0;
    background: none;
    color: var(--ink);
  }

  .footer {
    padding: 12px 0 14px;
    color: #8e9abb;
    font-size: 13px;
    text-align: center;
  }

  .footer a {
    color: #0d6a72;
  }
</style>
